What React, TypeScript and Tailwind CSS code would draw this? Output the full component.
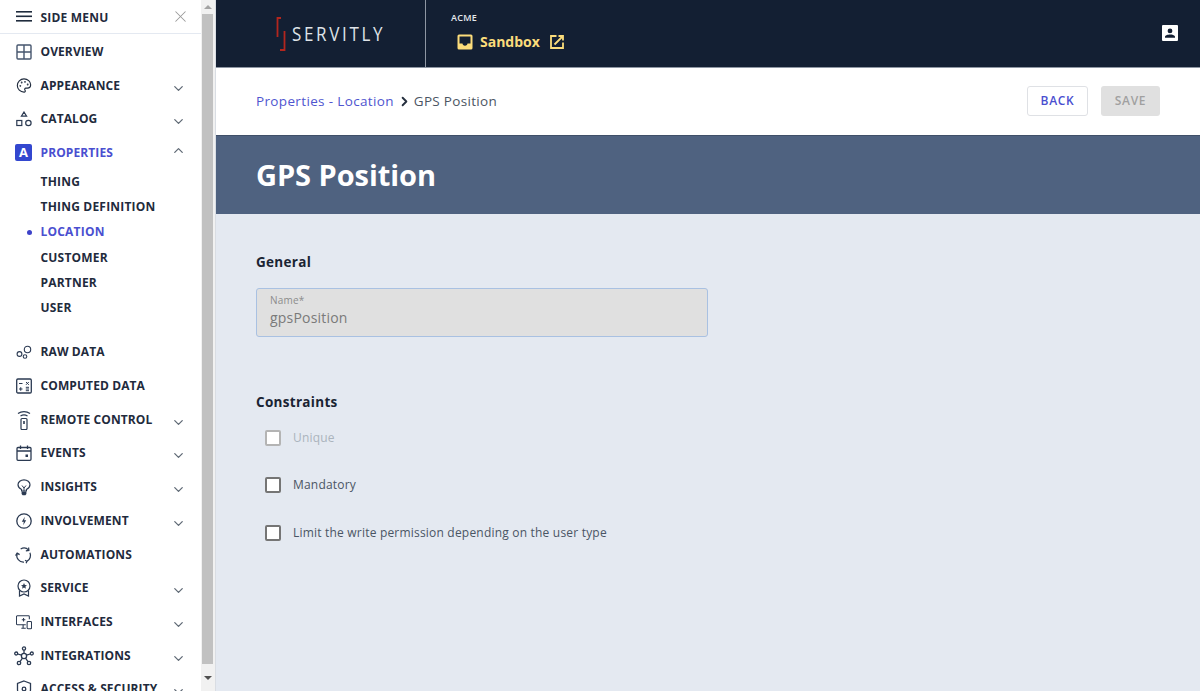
import React from "react";
import { X, ChevronDown, ChevronUp, ChevronRight, Palette } from "lucide-react";

const iconClass = "w-[17px] h-[17px] text-[#1f2b3d]";

const HamburgerIcon = () => (
  <svg viewBox="0 0 16 11" className="w-[16px] h-[11px] ml-[16px]" fill="#1f2b3d">
    <rect x="0" y="0" width="16" height="1.600" />
    <rect x="0" y="4.500" width="16" height="1.600" />
    <rect x="0" y="9" width="16" height="1.600" />
  </svg>
);

const OverviewIcon = () => (
  <svg viewBox="0 0 16 16" className="w-[16px] h-[16px]" fill="none" stroke="#46566e" strokeWidth="1.400">
    <rect x="1" y="1" width="14" height="14" rx="1" />
    <path d="M8 1v14M1 8h14" />
  </svg>
);

const CatalogIcon = () => (
  <svg viewBox="0 0 16 16" className="w-[16px] h-[16px]" fill="none" stroke="#2b3a52" strokeWidth="1.200">
    <path d="M8 1l2.600 4.200H5.400z" />
    <rect x="0.800" y="9.500" width="5" height="5" />
    <circle cx="12.400" cy="12" r="2.700" />
  </svg>
);

const RawDataIcon = () => (
  <svg viewBox="0 0 16 16" className={iconClass} fill="none" stroke="#2b3a52" strokeWidth="1.100">
    <circle cx="3.500" cy="9.500" r="2.400" />
    <circle cx="11.500" cy="5" r="3.200" />
    <circle cx="9" cy="12" r="1.800" />
  </svg>
);

const ComputedIcon = () => (
  <svg viewBox="0 0 16 16" className="w-[16px] h-[16px]" fill="none" stroke="#2b3a52" strokeWidth="1">
    <rect x="0.700" y="1" width="14.600" height="14" rx="1.200" strokeWidth="1.300" />
    <path d="M3 5.500h3.500M10 4l2.800 2.800M12.800 4L10 6.800M3 11h3.500M4.750 9.200v3.600M9.800 9.300h3.200M9.800 11h3.200M9.800 12.700h3.200" />
  </svg>
);

const RemoteIcon = () => (
  <svg viewBox="0 0 16 20" className="w-[16px] h-[20px]" fill="none" stroke="#2b3a52" strokeWidth="1.200">
    <path d="M2 3.500c3.500-2.500 8.500-2.500 12 0M4.500 6c2-1.300 5-1.300 7 0" />
    <rect x="5" y="8.500" width="6" height="11" rx="1" />
    <path d="M8 11v3" strokeWidth="1.600" />
  </svg>
);

const EventsIcon = () => (
  <svg viewBox="0 0 16 16" className="w-[16px] h-[16px]" fill="none" stroke="#2b3a52" strokeWidth="1.300">
    <rect x="1" y="2.500" width="14" height="12.800" rx="1" />
    <path d="M1 6h14M4.500 0.500v3.500M11.500 0.500v3.500" />
    <rect x="9.500" y="9.500" width="2.500" height="2.500" fill="#2b3a52" stroke="none" />
  </svg>
);

const InsightsIcon = () => (
  <svg viewBox="0 0 14 17" className="w-[14px] h-[17px]" fill="none" stroke="#2b3a52" strokeWidth="1.200">
    <path d="M4.600 12V10.500C2.600 9.500 1 8 1 5.800 1 3 3.700 .8 7 .8s6 2.200 6 5c0 2.200-1.600 3.700-3.600 4.700V12z" />
    <path d="M5 6.500L7 9l2-2.500M7 9v3" strokeWidth="1" />
    <path d="M4.600 12.500h4.800V15l-1 1.300H5.600l-1-1.300z" fill="#2b3a52" stroke="none" />
  </svg>
);

const BoltIcon = () => (
  <svg viewBox="0 0 16 16" className="w-[16px] h-[16px]" fill="none" stroke="#2b3a52" strokeWidth="1.300">
    <circle cx="8" cy="8" r="7.200" />
    <path d="M8.800 3.800L5.800 8.800h2l-.6 3.400 3-5h-2z" fill="#2b3a52" stroke="none" />
  </svg>
);

const AutomationsIcon = () => (
  <svg viewBox="0 0 18 18" className="w-[18px] h-[18px] -ml-[1px]" fill="none" stroke="#2b3a52" strokeWidth="1.300">
    <path d="M6 2.600a7 7 0 0 1 8.500 1.200" />
    <path d="M15.800 6.500a7 7 0 0 1-3 9" />
    <path d="M9.500 16.500A7 7 0 0 1 2.200 7.500" />
    <path d="M11.500 4.600l3.200-.4-.3-3.200M10.600 14.500l2 1.200-.8 2M.6 9.600l1.700-2.600 2.600 1.600" />
  </svg>
);

const ServiceIcon = () => (
  <svg viewBox="0 0 16 18" className="w-[16px] h-[18px]" fill="none" stroke="#2b3a52" strokeWidth="1.200">
    <circle cx="8" cy="7" r="6" />
    <path d="M8 4l.9 2 2.100.2-1.600 1.400.5 2.100L8 8.600 6.100 9.700l.5-2.100L5 6.200 7.100 6z" fill="#2b3a52" stroke="none" />
    <path d="M3.500 11.500V17L8 15l4.500 2v-5.500" />
  </svg>
);

const InterfacesIcon = () => (
  <svg viewBox="0 0 18 16" className="w-[18px] h-[16px]" fill="none" stroke="#2b3a52" strokeWidth="1.200">
    <path d="M11 11H1.500a1 1 0 0 1-1-1V2a1 1 0 0 1 1-1H14a1 1 0 0 1 1 1v3" />
    <path d="M6 15h5M8 11v4M6.500 5.500h4M8.500 3.500v4" />
    <rect x="12.500" y="7.500" width="5" height="8" rx="1" />
  </svg>
);

const IntegrationsIcon = () => (
  <svg viewBox="0 0 20 20" className="w-[20px] h-[20px] shrink-0" fill="none" stroke="#2b3a52" strokeWidth="1.300">
    <circle cx="10" cy="10" r="2.600" />
    <circle cx="10" cy="2.500" r="1.600" />
    <circle cx="2.200" cy="7.500" r="1.500" />
    <circle cx="17.800" cy="7.500" r="1.500" />
    <circle cx="5" cy="17" r="1.700" />
    <circle cx="15" cy="17" r="1.700" />
    <path d="M10 4.100v3.300M3.700 8l3.900 1.200M16.300 8l-3.900 1.200M6 15.600l2.500-3.500M14 15.600l-2.500-3.500" />
  </svg>
);

const ShieldIcon = () => (
  <svg viewBox="0 0 16 18" className="w-[16px] h-[18px]" fill="none" stroke="#2b3a52" strokeWidth="1.300">
    <path d="M8 1l6.500 2.500v6c0 3.500-3 6-6.500 7.500-3.500-1.500-6.500-4-6.500-7.500v-6z" />
    <circle cx="8" cy="9" r="1.800" />
  </svg>
);

const items = [
  { label: "OVERVIEW", icon: <OverviewIcon /> },
  { label: "APPEARANCE", icon: <Palette className={iconClass} strokeWidth={1.700} />, arrow: true },
  { label: "CATALOG", icon: <CatalogIcon />, arrow: true },
];

const items2 = [
  { label: "RAW DATA", icon: <RawDataIcon /> },
  { label: "COMPUTED DATA", icon: <ComputedIcon /> },
  { label: "REMOTE CONTROL", icon: <RemoteIcon />, arrow: true },
  { label: "EVENTS", icon: <EventsIcon />, arrow: true },
  { label: "INSIGHTS", icon: <InsightsIcon />, arrow: true },
  { label: "INVOLVEMENT", icon: <BoltIcon />, arrow: true },
  { label: "AUTOMATIONS", icon: <AutomationsIcon /> },
  { label: "SERVICE", icon: <ServiceIcon />, arrow: true },
  { label: "INTERFACES", icon: <InterfacesIcon />, arrow: true },
  { label: "INTEGRATIONS", icon: <IntegrationsIcon />, arrow: true },
  { label: "ACCESS & SECURITY", icon: <ShieldIcon />, arrow: true },
];

const subItems = ["THING", "THING DEFINITION", "LOCATION", "CUSTOMER", "PARTNER", "USER"];

const MenuRow = ({ label, icon, arrow }: { label: string; icon: React.ReactNode; arrow?: boolean }) => (
  <div className="h-[33.700px] shrink-0 flex items-center">
    <div className="w-[16px] ml-[16px] flex justify-center">{icon}</div>
    <div className="ml-[8.500px] text-[12px] font-bold tracking-[0.1px] text-[#1f2b3d]">{label}</div>
    {arrow && <ChevronDown className="ml-auto mr-[15px] mt-[5px] w-[15px] h-[15px] text-[#5f6975]" strokeWidth={2} />}
  </div>
);

const Sidebar = () => (
  <div className="w-[216px] h-[691px] shrink-0 flex bg-white overflow-hidden">
    <div className="w-[201px] flex flex-col shrink-0">
      <div className="h-[34px] shrink-0 flex items-center border-b border-[#e4e9f1]">
        <HamburgerIcon />
        <div className="ml-[8.500px] pt-[2px] text-[12px] font-bold tracking-[0.2px] text-[#1f2b3d]">SIDE MENU</div>
        <X className="ml-auto mr-[11px] w-[19px] h-[19px] text-[#9a9a9a]" strokeWidth={1.300} />
      </div>
      <div className="h-[1px] shrink-0" />
      {items.map((item) => (
        <MenuRow key={item.label} {...item} />
      ))}
      <div className="h-[33.700px] shrink-0 flex items-center">
        <div className="ml-[15px] w-[17px] h-[17px] rounded-[2px] bg-[#3347cf] text-white text-[13px] font-bold flex items-center justify-center">
          A
        </div>
        <div className="ml-[8.500px] text-[12px] font-bold tracking-[0.1px] text-[#4a4fd0]">PROPERTIES</div>
        <ChevronUp className="ml-auto mr-[15px] mb-[4px] w-[15px] h-[15px] text-[#5f6975]" strokeWidth={2} />
      </div>
      <div className="flex flex-col -mt-[0.500px] pb-[14.500px]">
        {subItems.map((s) => (
          <div key={s} className="h-[25.300px] flex items-center relative pl-[40.500px]">
            {s === "LOCATION" && <div className="absolute left-[27px] w-[5px] h-[5px] rounded-full bg-[#3d42c9]" />}
            <div className={`text-[12px] font-bold tracking-[0.2px] ${s === "LOCATION" ? "text-[#4a4fd0]" : "text-[#1f2b3d]"}`}>{s}</div>
          </div>
        ))}
      </div>
      {items2.map((item) => (
        <MenuRow key={item.label} {...item} />
      ))}
    </div>
    <div className="w-[15px] shrink-0 bg-[#f1f1f1] border-r border-[#d9dde3] flex flex-col">
      <div className="h-[14px] shrink-0 flex items-center justify-center">
        <div className="w-0 h-0 border-l-[4px] border-r-[4px] border-b-[4px] border-l-transparent border-r-transparent border-b-[#a3a3a3]" />
      </div>
      <div className="h-[650px] w-[11px] ml-[1px] shrink-0 bg-[#c1c1c1]" />
      <div className="flex-1 flex items-center justify-center">
        <div className="w-0 h-0 border-l-[4px] border-r-[4px] border-t-[4px] border-l-transparent border-r-transparent border-t-[#505050]" />
      </div>
    </div>
  </div>
);

const Logo = () => (
  <div className="w-[210px] h-full flex items-center border-r border-[#8e96a3] pl-[60px]">
    <svg viewBox="0 0 10 34" className="w-[10px] h-[34px]" fill="none" stroke="#b3261e" strokeWidth="1.800">
      <path d="M5 1H1.500v19M8.500 14v19H4" />
    </svg>
    <div className="ml-[6px] text-[17px] tracking-[2.650px] text-[#dfe3e8] leading-none scale-y-[1.200]">SERVITLY</div>
  </div>
);

const Header = () => (
  <div className="h-[68px] shrink-0 bg-[#131f33] border-b border-[#8e96a3] flex items-stretch">
    <Logo />
    <div className="pl-[25px] pt-[12px] flex flex-col">
      <div className="text-[9px] font-semibold leading-[12px] tracking-[0.3px] text-[#e6e9ee]">ACME</div>
      <div className="flex items-center mt-[10px] ml-[6px] text-[#fbdc7b]">
        <svg viewBox="0 0 16 16" className="w-[16px] h-[16px]" fill="currentColor">
          <path fillRule="evenodd" d="M2 0.500h12a1.500 1.500 0 0 1 1.500 1.500v12a1.500 1.500 0 0 1-1.500 1.500H2A1.500 1.500 0 0 1 .5 14V2A1.500 1.500 0 0 1 2 .5zM2.500 2.500v7h3c0 1.200 1 2.200 2.500 2.200s2.500-1 2.500-2.200h3v-7z" />
        </svg>
        <div className="ml-[7px] text-[14px] font-bold leading-none">Sandbox</div>
        <svg viewBox="0 0 14 14" className="ml-[10px] w-[14px] h-[14px]" fill="none" stroke="currentColor" strokeWidth="1.800">
          <path d="M6.500 1H1v12h12V7.500" />
          <path d="M4.500 9.500L13 1M8.500 1H13v4.500" />
        </svg>
      </div>
    </div>
    <div className="ml-auto mr-[22px] self-center mb-[1px]">
      <svg viewBox="0 0 16 16" className="w-[16px] h-[16px]" fill="#ffffff">
        <path fillRule="evenodd" d="M1 0h14a1 1 0 0 1 1 1v14a1 1 0 0 1-1 1H1a1 1 0 0 1-1-1V1a1 1 0 0 1 1-1zM8 3.500a2.400 2.400 0 1 0 0 4.800 2.400 2.400 0 0 0 0-4.800zM3 12.800h10v-1c0-1.500-3-2.300-5-2.300s-5 .8-5 2.300z" />
      </svg>
    </div>
  </div>
);

const Check = ({ label, disabled }: { label: string; disabled?: boolean }) => (
  <div className="h-[47.500px] flex items-center pl-[9px]">
    <div className={`w-[16px] h-[16px] rounded-[2px] bg-white border-2 ${disabled ? "border-[#b4b4b4]" : "border-[#757575]"}`} />
    <div className={`ml-[12px] text-[12px] tracking-[0.2px] ${disabled ? "text-[#abb4bd]" : "text-[#4a5564]"}`}>{label}</div>
  </div>
);

export default function App() {
  return (
    <div className="w-[1200px] h-[691px] flex overflow-hidden bg-[#e4e9f1] font-['Open_Sans',sans-serif]">
      <Sidebar />
      <div className="flex-1 flex flex-col min-w-0">
        <Header />
        <div className="h-[67px] shrink-0 bg-white flex items-center pl-[40px] pr-[40px]">
          <div className="text-[13.500px] tracking-[0.35px] text-[#4f55cf]">Properties - Location</div>
          <ChevronRight className="ml-[3px] mr-[2px] w-[15px] h-[15px] text-[#26303f]" strokeWidth={3} />
          <div className="text-[13.500px] tracking-[0.3px] text-[#4b5563]">GPS Position</div>
          <div className="ml-auto flex gap-[13px] mb-[2px]">
            <div className="w-[61px] h-[30px] rounded-[3px] border border-[#dfe1e5] bg-white flex items-center justify-center text-[12px] font-semibold tracking-[0.7px] text-[#4a4fd0]">
              BACK
            </div>
            <div className="w-[59px] h-[30px] rounded-[3px] bg-[#e0e0e0] flex items-center justify-center text-[12px] font-semibold tracking-[0.7px] text-[#a0a0a0]">
              SAVE
            </div>
          </div>
        </div>
        <div className="h-[79px] shrink-0 bg-[#4f6280] border-t border-[#3f4f68] flex items-center pl-[40px]">
          <h1 className="text-[29px] font-bold tracking-[-0.05px] text-white">GPS Position</h1>
        </div>
        <div className="flex-1 pl-[40px] pt-[38px]">
          <div className="text-[13.500px] font-bold tracking-[0.3px] text-[#1a2433] leading-[20px]">General</div>
          <div className="mt-[16px] w-[452px] h-[49px] rounded-[3px] bg-[#e0e0e0] border border-[#a9c1e2] pl-[13px] pt-[4px]">
            <div className="text-[10px] leading-[14px] tracking-[0.2px] text-[#8c8c8c]">Name*</div>
            <div className="text-[14px] leading-[20px] pt-[1px] tracking-[0.2px] text-[#7a7a7a]">gpsPosition</div>
          </div>
          <div className="mt-[55px] text-[13.500px] font-bold tracking-[0.3px] text-[#1a2433] leading-[20px]">Constraints</div>
          <div className="mt-[2px] flex flex-col">
            <Check label="Unique" disabled />
            <Check label="Mandatory" />
            <Check label="Limit the write permission depending on the user type" />
          </div>
        </div>
      </div>
    </div>
  );
}
